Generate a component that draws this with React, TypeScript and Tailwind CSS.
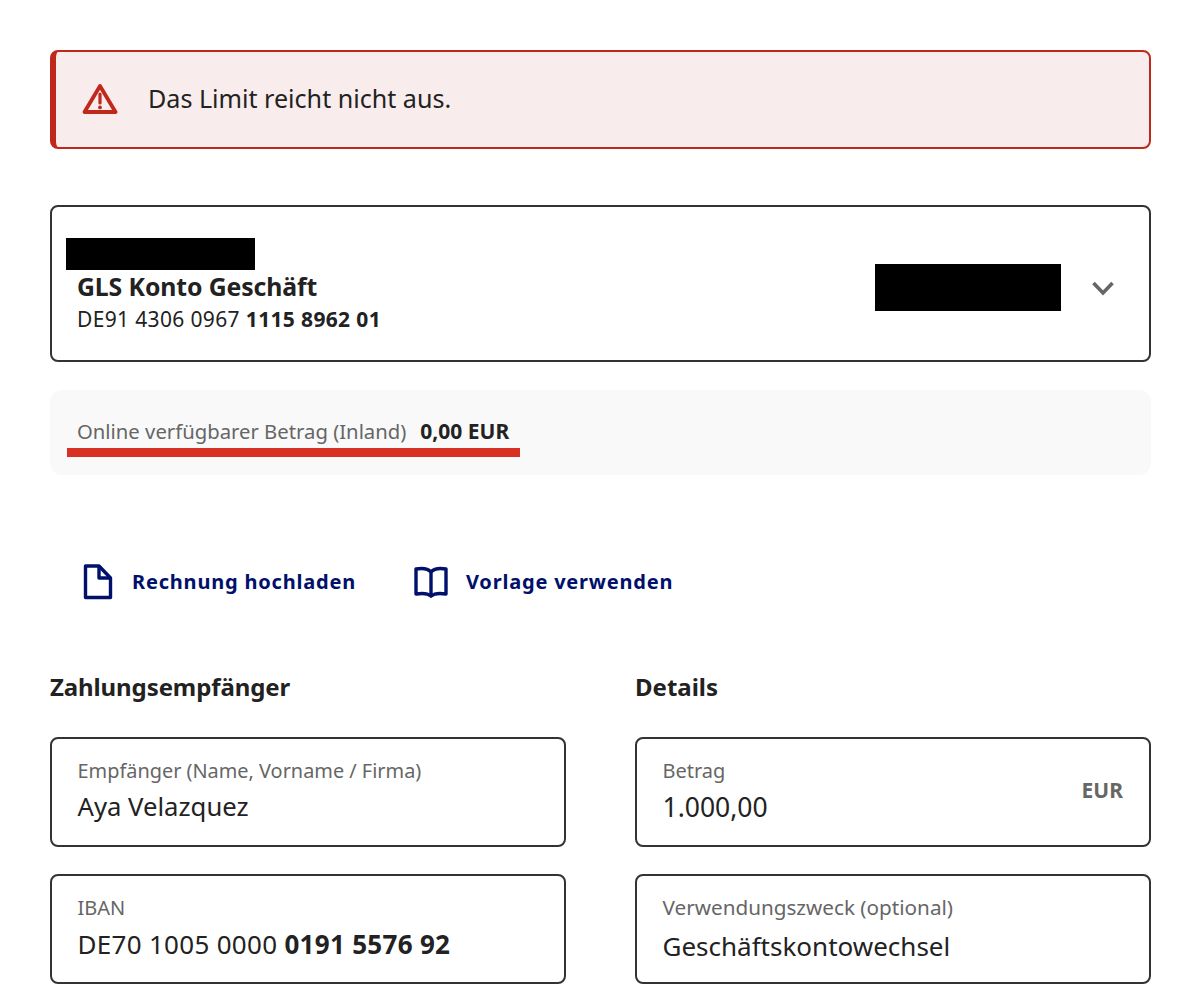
const font = { fontFamily: '"Noto Sans", sans-serif' };

function Warning() {
  return (
    <svg width="36" height="32" viewBox="0 0 36 32" fill="none">
      <path d="M18 3 L33.5 29 H2.5 Z" stroke="#c0281c" strokeWidth="3.8" strokeLinejoin="round" />
      <path d="M18 11 V20" stroke="#c0281c" strokeWidth="3.2" strokeLinecap="round" />
      <circle cx="18" cy="24.4" r="1.9" fill="#c0281c" />
    </svg>
  );
}

function Doc() {
  return (
    <svg width="30" height="36" viewBox="0 0 30 36" fill="none" stroke="#00106b" strokeWidth="3.4" strokeLinejoin="round">
      <path d="M2.5 2 H16 L27.5 14 V33.5 H2.5 Z" />
      <path d="M16 2 V14 H27.5" />
    </svg>
  );
}

function Book() {
  return (
    <svg width="36" height="32" viewBox="0 0 36 32" fill="none" stroke="#00106b" strokeWidth="3.4" strokeLinejoin="round" strokeLinecap="round">
      <path d="M18 6 C15 2.5 9 2 3 3 V28 C9 27 15 27.5 18 30 C21 27.5 27 27 33 28 V3 C27 2 21 2.5 18 6 Z" />
      <path d="M18 6 V30" />
    </svg>
  );
}

function Field({
  label,
  value,
  suffix,
  labelClass = "text-[20px]",
  valueClass = "text-[26px]",
}: {
  label: string;
  value: React.ReactNode;
  suffix?: string;
  labelClass?: string;
  valueClass?: string;
}) {
  return (
    <div className="flex h-[110px] items-center justify-between rounded-lg border-2 border-[#333333] pb-[3px] pl-[25.5px] pr-[26px]">
      <div className="flex flex-col">
        <span className={`leading-[28px] text-[#666666] ${labelClass}`}>{label}</span>
        <span className={`mt-[5px] leading-[34px] text-[#222222] ${valueClass}`}>{value}</span>
      </div>
      {suffix && <span className="text-[21px] font-bold text-[#666666]">{suffix}</span>}
    </div>
  );
}

export default function App() {
  return (
    <div style={font} className="min-h-[1006px] bg-white pl-[50px] pr-[49px] pt-[50px] text-[#222222]">
      <div className="flex h-[99px] items-center rounded-lg border-2 border-l-[6px] border-[#c0281c] bg-[#f9ecec] pb-[2px] pl-[26px]">
        <Warning />
        <span className="ml-[30px] text-[25.1px] text-[#222222]">Das Limit reicht nicht aus.</span>
      </div>

      <div className="relative mt-[56px] flex h-[157px] items-center justify-between rounded-lg border-2 border-[#333333] pl-[25px] pr-[34px]">
        <div className="mt-[35px] flex flex-col">
          <span className="text-[24.8px] font-bold leading-[34px] tracking-[-0.1px]">GLS Konto Geschäft</span>
          <span className="mt-[2px] text-[21px] leading-[28px] tracking-[0.35px]">
            DE91 4306 0967 <b>1115 8962 01</b>
          </span>
        </div>
        <svg width="24" height="16" viewBox="0 0 24 16" fill="none" className="mt-[8px]">
          <path d="M2.5 3 L12 13 L21.5 3" stroke="#666666" strokeWidth="3.6" />
        </svg>
        <div className="absolute left-[14px] top-[31px] h-[32px] w-[189px] bg-black" />
        <div className="absolute left-[823px] top-[57px] h-[47px] w-[186px] bg-black" />
      </div>

      <div className="relative mt-[28px] flex h-[85px] items-center rounded-xl bg-[#f9f9f9] pb-[2px] pl-[27px]">
        <span className="text-[20.3px] text-[#666666]">Online verfügbarer Betrag (Inland)</span>
        <b className="ml-[14px] text-[21px] text-[#222222]">0,00 EUR</b>
        <div className="absolute left-[17px] top-[58px] h-[9px] w-[453px] bg-[#d93024]" />
      </div>

      <div className="mt-[89px] flex items-center pl-[33px] text-[20px] font-bold tracking-[0.8px] text-[#00106b]">
        <Doc />
        <span className="ml-[19px]">Rechnung hochladen</span>
        <span className="ml-[57px]"><Book /></span>
        <span className="ml-[17px]">Vorlage verwenden</span>
      </div>

      <div className="mt-[70px] grid grid-cols-[516px_516px] gap-x-[69px]">
        <div className="flex flex-col">
          <h2 className="mb-[33px] text-[24px] font-bold leading-[34px] tracking-[-0.1px]">Zahlungsempfänger</h2>
          <Field
            label="Empfänger (Name, Vorname / Firma)"
            value="Aya Velazquez"
            labelClass="text-[19.9px]"
            valueClass="text-[25.7px]"
          />
          <div className="mt-[27px]">
            <Field label="IBAN" value={<>DE70 1005 0000 <b>0191 5576 92</b></>} valueClass="text-[26px] tracking-[0.3px]" />
          </div>
        </div>
        <div className="flex flex-col">
          <h2 className="mb-[33px] text-[24px] font-bold leading-[34px]">Details</h2>
          <Field label="Betrag" value="1.000,00" suffix="EUR" valueClass="text-[26.5px]" />
          <div className="mt-[27px]">
            <Field
              label="Verwendungszweck (optional)"
              value="Geschäftskontowechsel"
              labelClass="text-[20.7px]"
              valueClass="pt-[3px] text-[26px]"
            />
          </div>
        </div>
      </div>
    </div>
  );
}
